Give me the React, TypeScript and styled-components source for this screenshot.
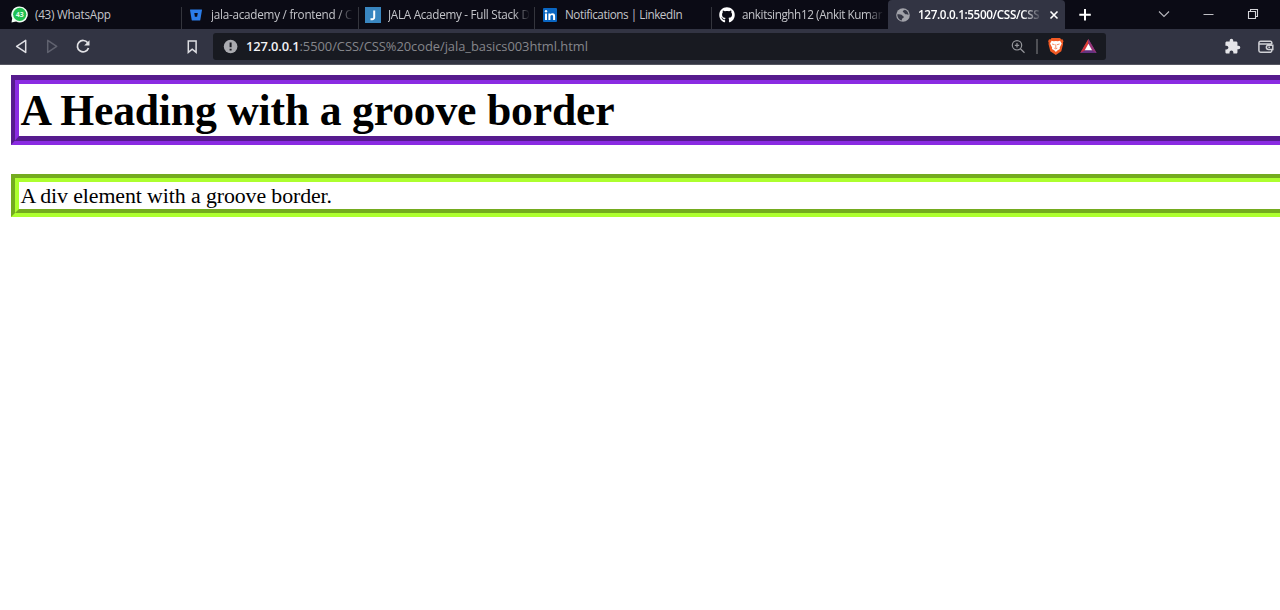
import React from "react";
import styled, { createGlobalStyle } from "styled-components";
import { FaGithub } from "react-icons/fa";
import { MdExtension } from "react-icons/md";

const GlobalStyle = createGlobalStyle`
  * { box-sizing: border-box; }
  body { margin: 0; background: #fff; overflow: hidden; }
`;

const Window = styled.div`
  width: 1280px;
  height: 610px;
  overflow: hidden;
  background: #fff;
`;

const TabStrip = styled.div`
  display: flex;
  height: 29px;
  background: #0b0b15;
  color: #c4c5ca;
  font: 11.7px/16px "Open Sans", "Noto Sans", sans-serif;
`;

const Tab = styled.div<{ $width: number; $active?: boolean; $divider?: boolean; $inset?: number }>`
  display: flex;
  align-items: center;
  width: ${(p) => p.$width}px;
  flex: none;
  height: 29px;
  padding-left: ${(p) => p.$inset ?? 5}px;
  background: ${(p) =>
    p.$active
      ? "#323443"
      : p.$divider
      ? "linear-gradient(#34353d, #34353d) right 7px / 1px 22px no-repeat"
      : "transparent"};
  border-radius: ${(p) => (p.$active ? "4px 4px 0 0" : "0")};
  color: ${(p) => (p.$active ? "#fff" : "inherit")};
  svg { flex: none; display: block; }
`;

const TabTitle = styled.span<{ $width: number; $spacing?: number; $fade?: number; $bold?: boolean }>`
  width: ${(p) => p.$width}px;
  flex: none;
  margin-left: 7px;
  padding-bottom: 2px;
  overflow: hidden;
  white-space: nowrap;
  letter-spacing: ${(p) => p.$spacing ?? 0}px;
  font-weight: ${(p) => (p.$bold ? 600 : 400)};
  mask-image: ${(p) => (p.$fade ? `linear-gradient(90deg, #000 calc(100% - ${p.$fade}px), transparent)` : "none")};
`;

const IconSlot = styled.span`
  display: flex;
  justify-content: center;
  width: 17px;
  flex: none;
`;

const WindowControls = styled.div`
  display: flex;
  flex: 1;
  align-items: center;
  svg { display: block; flex: none; }
`;

const Toolbar = styled.div`
  display: flex;
  align-items: center;
  height: 36px;
  background: #323443;
  border-bottom: 1px solid #555661;
  svg { display: block; flex: none; }
`;

const Navigation = styled.div`
  display: flex;
  width: 213px;
  flex: none;
`;

const AddressBar = styled.div`
  display: flex;
  align-items: center;
  width: 893px;
  height: 27px;
  flex: none;
  border-radius: 3px;
  background: #181a21;
`;

const Url = styled.span`
  width: 765px;
  flex: none;
  padding-bottom: 2px;
  white-space: nowrap;
  color: #85868b;
  font: 12.9px/18px "Open Sans", "Noto Sans", sans-serif;
  letter-spacing: -0.04px;
`;

const Host = styled.span`
  color: #f2f2f4;
  font-weight: 600;
  letter-spacing: -0.15px;
`;

const Extensions = styled.div`
  display: flex;
  align-items: center;
  margin-left: 118px;
  gap: 17px;
`;

const Page = styled.main`
  width: 1320px;
  padding: 10px 0 0 11px;
  color: #000;
  font-family: "Liberation Serif", "Times New Roman", serif;
`;

const Heading = styled.h1`
  height: 70px;
  margin: 0 0 29px;
  padding-left: 1.5px;
  border: 9px groove blueviolet;
  border-left-width: 8px;
  font-size: 43.7px;
  line-height: 52px;
  letter-spacing: -0.2px;
`;

const Block = styled.div`
  height: 43px;
  padding-left: 1.4px;
  border: 8px groove greenyellow;
  font-size: 21.87px;
  line-height: 28px;
  letter-spacing: -0.1px;
`;

const WhatsAppIcon = () => (
  <svg width="17" height="17" viewBox="0 0 17 17">
    <path d="M8.7.5a8 8 0 1 1-3.6 15.1L.5 16.4l.7-4.2A8 8 0 0 1 8.7.5Z" fill="#f3fff5" />
    <circle cx="8.7" cy="8.3" r="6.6" fill="#20c151" />
    <text x="8.7" y="10.8" textAnchor="middle" fontFamily="Open Sans, sans-serif" fontSize="7" fontWeight="700" fill="#dffbe6">43</text>
  </svg>
);

const BitbucketIcon = () => (
  <svg width="12" height="12" viewBox="0 0 12 12">
    <path d="M.5.5h11a.5.5 0 0 1 .5.6l-1.700 9.900a.7.7 0 0 1-.7.6H2.400a.7.7 0 0 1-.7-.6L0 1.100A.5.5 0 0 1 .5.5ZM4.300 4l.6 3.700h2.200L7.800 4Z" fillRule="evenodd" fill="#2b7de9" />
  </svg>
);

const JalaIcon = () => (
  <svg width="16" height="16" viewBox="0 0 16 16">
    <rect width="16" height="16" fill="#3986c0" />
    <path d="M9.200 3.500v6.700a2 2 0 0 1-2 2.100H5.500" fill="none" stroke="#fff" strokeWidth="2" />
  </svg>
);

const LinkedInIcon = () => (
  <svg width="14" height="14" viewBox="0 0 14 14">
    <rect width="14" height="14" rx="1" fill="#0a66c2" />
    <path d="M2 5.400h2V12H2zM5.400 5.400h2v.9c.4-.7 1.100-1.100 2.100-1.100 2 0 2.600 1.200 2.600 3V12h-2V8.600c0-.9-.1-1.700-1.200-1.700S7.400 7.700 7.400 8.600V12h-2z" fill="#fff" />
    <circle cx="3" cy="3.300" r="1.200" fill="#fff" />
  </svg>
);

const GlobeIcon = () => (
  <svg width="14" height="14" viewBox="0 0 14 14">
    <circle cx="7" cy="7" r="6.800" fill="#a1a2a9" />
    <path d="M1.400 6.300c2.200.1 4.200 0 5 1.100.5.8 1.600.8 1.400 1.800-.2.900-1.500.8-1.700 1.600l-.4 1.700C3.100 12 1 9.200 1.400 6.300ZM8.800 1.800C7.900 2.500 7 2.500 6.800 3.400c-.1 1 1 .8 1.500 1.500.4.800 1.100 1.500 2.100 1.300.8-.1 1.300.3 2.100.8.1-2.400-1.500-4.600-3.700-5.200Z" fill="#363846" />
  </svg>
);

const BackForwardIcons = () => (
  <svg width="100" height="35" viewBox="0 0 100 35" fill="none" strokeWidth="1.500" strokeLinejoin="round">
    <path d="M25.700 11.400v12L16.600 17.400Z" stroke="#dedee3" />
    <path d="M47.700 11.400v12l9-6Z" stroke="#60626f" />
    <path d="M87.700 13.800a5.700 5.700 0 1 0 .8 5.200" stroke="#e2e2e6" strokeWidth="1.700" />
    <path d="M89.500 11.300v5.200h-5.300Z" fill="#e2e2e6" />
  </svg>
);

const BookmarkIcon = () => (
  <svg width="113" height="35" viewBox="0 0 113 35" fill="none">
    <path d="M88.300 11.900h7.800v11.400l-3.900-3.200-3.900 3.200Z" stroke="#dedee3" strokeWidth="1.500" />
  </svg>
);

const InfoIcon = () => (
  <svg width="33" height="20" viewBox="0 0 33 20">
    <circle cx="17.600" cy="9.500" r="6.800" fill="#aaabb0" />
    <path d="M17.600 5.500v4.700M17.600 11.700v1.800" stroke="#181a21" strokeWidth="2" />
  </svg>
);

const AddressIcons = () => (
  <svg width="95" height="27" viewBox="1011 33 95 27">
    <defs>
      <linearGradient id="bat" x1="0" y1="0" x2="0" y2="1">
        <stop offset="0" stopColor="#ee4b22" />
        <stop offset="1" stopColor="#c52a48" />
      </linearGradient>
    </defs>
    <circle cx="1017" cy="45.300" r="4.700" fill="none" stroke="#96979c" strokeWidth="1.200" />
    <path d="M1014.800 45.300h4.400M1017 43.100v4.400M1020.400 48.700l4.100 4" stroke="#96979c" strokeWidth="1.200" />
    <path d="M1037 39v15" stroke="#85868a" />
    <path d="M1051.500 38h8.500l1.300 1.500 1.200-.2 1 2-.6 1.500.2 1.200-1.800 7.300-5.500 3.700-5.500-3.700-1.800-7.300.2-1.200-.6-1.500 1-2 1.200.2Z" fill="#f15a24" />
    <path d="m1051.600 40.800 2.100.5 2.100-.4 2.100.4 2.100-.5 1.700 2.700-2 4 .1 1.600-2.500 1.500-1.400 1.300-1.400-1.300-2.500-1.500.1-1.600-2-4Z" fill="#fff" />
    <path d="m1052 44 2.600.7m5-.7-2.600.7m-1.200-.4v3.900m-1.500 0 1.500.7 1.500-.7" fill="none" stroke="#f15a24" strokeWidth=".7" />
    <path d="m1088.400 39-8.200 14h16.400Z" fill="#63317f" />
    <path d="m1088.400 39-8.200 14 5.200-3.100 3-5.300Z" fill="url(#bat)" />
    <path d="m1088.400 39 8.200 14-5.200-3.100-3-5.300Z" fill="#963578" />
    <path d="m1088.400 43.800-3.700 6.400h7.400Z" fill="#fff" />
  </svg>
);

const WalletIcon = () => (
  <svg width="16" height="14" viewBox="0 0 16 14" fill="none" stroke="#d0d1d6" strokeWidth="1.500">
    <path d="M13.800 4V2.700A1.400 1.400 0 0 0 12.400 1.300H2.600A1.700 1.700 0 0 0 .9 3v7.500a1.700 1.700 0 0 0 1.700 1.700h9.800a1.400 1.400 0 0 0 1.400-1.400V10M1 4h12.800M14.800 5.200v4.300h-4.300a2.150 2.150 0 0 1 0-4.300ZM10.400 7.350h1.500" />
  </svg>
);

export default function App() {
  return (
    <Window>
      <GlobalStyle />
      <TabStrip>
        <Tab $width={182} $inset={11} $divider>
          <WhatsAppIcon />
          <TabTitle $width={140} $spacing={-0.27}>(43) WhatsApp</TabTitle>
        </Tab>
        <Tab $width={177} $divider>
          <IconSlot><BitbucketIcon /></IconSlot>
          <TabTitle $width={142} $fade={16} $spacing={-0.24}>jala-academy / frontend / C</TabTitle>
        </Tab>
        <Tab $width={176} $divider>
          <IconSlot><JalaIcon /></IconSlot>
          <TabTitle $width={142} $fade={16} $spacing={-0.28}>JALA Academy - Full Stack D</TabTitle>
        </Tab>
        <Tab $width={177} $inset={6} $divider>
          <IconSlot><LinkedInIcon /></IconSlot>
          <TabTitle $width={142} $spacing={-0.44}>Notifications | LinkedIn</TabTitle>
        </Tab>
        <Tab $width={176} $inset={6}>
          <IconSlot><FaGithub size={16} color="#fff" /></IconSlot>
          <TabTitle $width={142} $fade={18} $spacing={-0.4}>ankitsinghh12 (Ankit Kumar</TabTitle>
        </Tab>
        <Tab $width={177} $inset={6} $active>
          <IconSlot><GlobeIcon /></IconSlot>
          <TabTitle $width={124} $bold $fade={20} $spacing={-0.36}>127.0.0.1:5500/CSS/CSS</TabTitle>
          <svg width="24" height="20" viewBox="0 0 24 20"><path d="m8.500 6.500 7 7m0-7-7 7" stroke="#fff" strokeWidth="1.600" /></svg>
        </Tab>
        <WindowControls>
          <svg width="215" height="29" viewBox="1065 0 215 29" fill="none">
            <path d="M1085 9v11.500M1079.300 14.700h11.500" stroke="#fff" strokeWidth="2" />
            <path d="m1159 11.500 5 5 5-5" stroke="#b7b7bd" strokeWidth="1.100" />
            <path d="M1203.500 14.500h10" stroke="#bebec3" />
            <path d="M1248.500 11.500h7v7h-7zM1250.500 11.500v-2h7v7h-2" stroke="#d5d5d9" strokeWidth="1.100" />
          </svg>
        </WindowControls>
      </TabStrip>
      <Toolbar>
        <Navigation><BackForwardIcons /><BookmarkIcon /></Navigation>
        <AddressBar>
          <InfoIcon />
          <Url><Host>127.0.0.1</Host>:5500/CSS/CSS%20code/jala_basics003html.html</Url>
          <AddressIcons />
        </AddressBar>
        <Extensions><MdExtension size={17} color="#e5e5e9" /><WalletIcon /></Extensions>
      </Toolbar>
      <Page>
        <Heading>A Heading with a groove border</Heading>
        <Block>A div element with a groove border.</Block>
      </Page>
    </Window>
  );
}
